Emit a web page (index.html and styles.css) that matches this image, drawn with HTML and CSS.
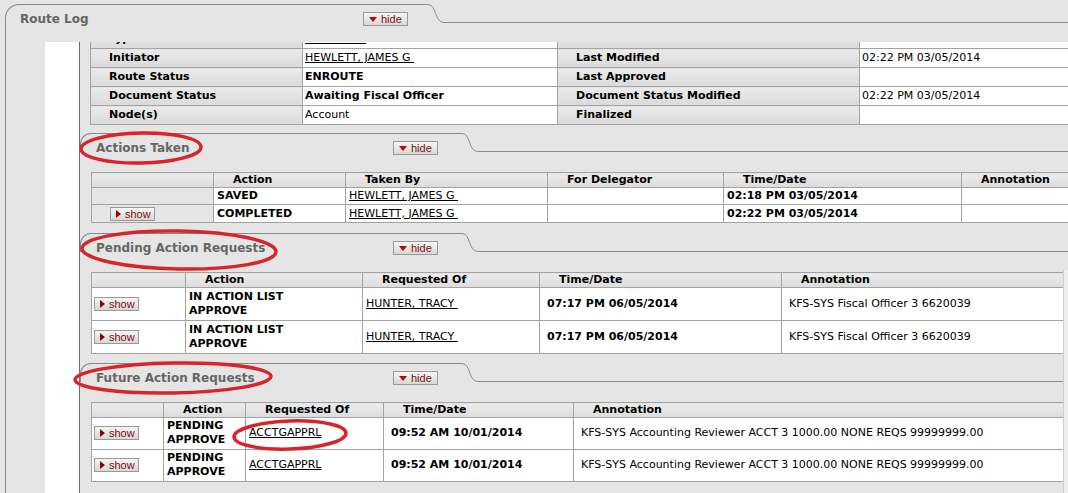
FILE: index.html
```html
<!DOCTYPE html>
<html lang="en">
<head>
<meta charset="utf-8">
<title>Route Log</title>
<link rel="stylesheet" href="styles.css">
</head>
<body>
<section class="routelog">
  <div class="tabbar">
    <div class="tab tab-main">
      <h2 class="tab-title">Route Log</h2>
      <button class="toggle" type="button"><span class="tri-down"></span>hide</button>
    </div>
    <svg class="tab-curve" viewBox="0 0 16 19" width="16" height="19"><path d="M0 0.5 C9 0.5 6 18.5 16 18.5" fill="none" stroke="#8a8a8a" stroke-width="1"/></svg>
    <div class="tab-rest"></div>
  </div>
  <div class="routelog-body">
    <div class="gutter"></div>
    <div class="frame">
      <table class="info">
        <colgroup><col class="c1"><col class="c2"><col class="c3"><col class="c4"></colgroup>
        <tr><th>Type</th><td><a href="#">ACCT DOC&nbsp;</a></td><th>Created</th><td></td></tr>
        <tr><th>Initiator</th><td><a href="#">HEWLETT, JAMES G&nbsp;</a></td><th>Last Modified</th><td>02:22 PM 03/05/2014</td></tr>
        <tr><th>Route Status</th><td><b>ENROUTE</b></td><th>Last Approved</th><td></td></tr>
        <tr><th>Document Status</th><td><b>Awaiting Fiscal Officer</b></td><th>Document Status Modified</th><td>02:22 PM 03/05/2014</td></tr>
        <tr><th>Node(s)</th><td>Account</td><th>Finalized</th><td></td></tr>
      </table>

      <section class="sub sub-taken">
        <div class="tabbar">
          <div class="tab tab-sub">
            <h3 class="tab-title">Actions Taken</h3>
            <button class="toggle" type="button"><span class="tri-down"></span>hide</button>
          </div>
          <svg class="tab-curve" viewBox="0 0 16 19" width="16" height="19"><path d="M0 0.5 C9 0.5 6 18.5 16 18.5" fill="none" stroke="#8a8a8a" stroke-width="1"/></svg>
          <div class="tab-rest"></div>
        </div>
        <div class="sub-body">
          <table class="grid taken">
            <colgroup><col style="width:122px"><col style="width:132px"><col style="width:202px"><col style="width:176px"><col style="width:238px"><col></colgroup>
            <tr><th></th><th>Action</th><th>Taken By</th><th>For Delegator</th><th>Time/Date</th><th>Annotation</th></tr>
            <tr><td class="btncell"></td><td><b>SAVED</b></td><td><a href="#">HEWLETT, JAMES G&nbsp;</a></td><td></td><td><b>02:18 PM 03/05/2014</b></td><td class="white"></td></tr>
            <tr><td class="btncell"><button class="toggle show" type="button"><span class="tri-right"></span>show</button></td><td><b>COMPLETED</b></td><td><a href="#">HEWLETT, JAMES G&nbsp;</a></td><td></td><td><b>02:22 PM 03/05/2014</b></td><td class="white"></td></tr>
          </table>
        </div>
      </section>

      <section class="sub sub-pending">
        <div class="tabbar">
          <div class="tab tab-sub">
            <h3 class="tab-title">Pending Action Requests</h3>
            <button class="toggle" type="button"><span class="tri-down"></span>hide</button>
          </div>
          <svg class="tab-curve" viewBox="0 0 16 19" width="16" height="19"><path d="M0 0.5 C9 0.5 6 18.5 16 18.5" fill="none" stroke="#8a8a8a" stroke-width="1"/></svg>
          <div class="tab-rest"></div>
        </div>
        <div class="sub-body">
          <table class="grid requests">
            <colgroup><col style="width:94px"><col style="width:177px"><col style="width:177px"><col style="width:242px"><col></colgroup>
            <tr><th></th><th>Action</th><th>Requested Of</th><th>Time/Date</th><th>Annotation</th></tr>
            <tr><td><button class="toggle show" type="button"><span class="tri-right"></span>show</button></td><td><b>IN ACTION LIST<br>APPROVE</b></td><td><a href="#">HUNTER, TRACY&nbsp;</a></td><td class="wide"><b>07:17 PM 06/05/2014</b></td><td class="wide">KFS-SYS Fiscal Officer 3 6620039</td></tr>
            <tr><td><button class="toggle show" type="button"><span class="tri-right"></span>show</button></td><td><b>IN ACTION LIST<br>APPROVE</b></td><td><a href="#">HUNTER, TRACY&nbsp;</a></td><td class="wide"><b>07:17 PM 06/05/2014</b></td><td class="wide">KFS-SYS Fiscal Officer 3 6620039</td></tr>
          </table>
        </div>
      </section>

      <section class="sub sub-future">
        <div class="tabbar">
          <div class="tab tab-sub">
            <h3 class="tab-title">Future Action Requests</h3>
            <button class="toggle" type="button"><span class="tri-down"></span>hide</button>
          </div>
          <svg class="tab-curve" viewBox="0 0 16 19" width="16" height="19"><path d="M0 0.5 C9 0.5 6 18.5 16 18.5" fill="none" stroke="#8a8a8a" stroke-width="1"/></svg>
          <div class="tab-rest"></div>
        </div>
        <div class="sub-body">
          <table class="grid requests future">
            <colgroup><col style="width:72px"><col style="width:82px"><col style="width:138px"><col style="width:190px"><col></colgroup>
            <tr><th></th><th>Action</th><th>Requested Of</th><th>Time/Date</th><th>Annotation</th></tr>
            <tr><td><button class="toggle show" type="button"><span class="tri-right"></span>show</button></td><td><b>PENDING<br>APPROVE</b></td><td><a href="#">ACCTGAPPRL</a></td><td class="wide"><b>09:52 AM 10/01/2014</b></td><td class="wide">KFS-SYS Accounting Reviewer ACCT 3 1000.00 NONE REQS 99999999.00</td></tr>
            <tr><td><button class="toggle show" type="button"><span class="tri-right"></span>show</button></td><td><b>PENDING<br>APPROVE</b></td><td><a href="#">ACCTGAPPRL</a></td><td class="wide"><b>09:52 AM 10/01/2014</b></td><td class="wide">KFS-SYS Accounting Reviewer ACCT 3 1000.00 NONE REQS 99999999.00</td></tr>
          </table>
        </div>
      </section>
    </div>
  </div>
</section>

<div class="scroll-thumb"></div>

<svg class="marks" width="1068" height="493" viewBox="0 0 1068 493">
  <g fill="none" stroke="#d8252b" stroke-width="3.5">
    <ellipse cx="141" cy="148" rx="60" ry="15" transform="rotate(-1 141 148)"/>
    <ellipse cx="179" cy="250" rx="97" ry="19" transform="rotate(1 179 250)"/>
    <ellipse cx="173" cy="378" rx="98" ry="15" transform="rotate(-1 173 378)"/>
    <ellipse cx="290" cy="435" rx="56" ry="14" transform="rotate(-2 290 435)"/>
  </g>
</svg>
</body>
</html>
```

FILE: styles.css
```css
html, body {
  margin: 0;
  padding: 0;
}

body {
  width: 1068px;
  height: 493px;
  overflow: hidden;
  position: relative;
  background: #e5e5e5;
  font-family: "DejaVu Sans", Verdana, sans-serif;
  font-size: 11px;
  color: #000;
}

.routelog {
  margin: 4px 0 0 5px;
  height: 489px;
  display: flex;
  flex-direction: column;
}

.tabbar {
  display: flex;
  height: 19px;
  flex: none;
}

.tab {
  box-sizing: border-box;
  height: 19px;
  border-top: 1px solid #8a8a8a;
  border-left: 1px solid #8a8a8a;
  display: flex;
  justify-content: space-between;
  align-items: flex-start;
  padding-top: 7px;
}

.tab-main {
  width: 423px;
  padding-left: 14px;
  padding-right: 20px;
  border-top-left-radius: 14px;
}

.tab-sub {
  width: 382px;
  padding-left: 15px;
  padding-right: 24px;
  border-top-left-radius: 11px;
}

.tab-title {
  margin: 0;
  font-size: 12px;
  line-height: 14px;
  font-weight: bold;
  color: #666;
  white-space: nowrap;
}

.tab-curve {
  display: block;
  flex: none;
}

.tab-rest {
  flex: 1;
  border-bottom: 1px solid #8a8a8a;
}

.toggle {
  box-sizing: border-box;
  width: 45px;
  height: 14px;
  margin: 0;
  padding: 0 0 0 5px;
  border: 1px solid #9a9a9a;
  background: linear-gradient(#f6f6f6, #d7d7d7);
  font-family: "Liberation Sans", Arial, sans-serif;
  font-size: 11px;
  line-height: 12px;
  color: #7a1010;
  display: flex;
  align-items: center;
  gap: 4px;
  flex: none;
}

.tri-down {
  width: 0;
  height: 0;
  border-left: 4px solid transparent;
  border-right: 4px solid transparent;
  border-top: 5px solid #c40000;
}

.tri-right {
  width: 0;
  height: 0;
  border-top: 4px solid transparent;
  border-bottom: 4px solid transparent;
  border-left: 5px solid #9a0000;
}

.routelog-body {
  flex: 1;
  min-height: 0;
  display: flex;
  border-left: 1px solid #8a8a8a;
  padding: 19px 0 0 39px;
}

.gutter {
  width: 34px;
  flex: none;
  background: #fff;
}

.frame {
  flex: 1;
  min-width: 0;
  border-left: 1px solid #6e6e6e;
  overflow: hidden;
}

table {
  border-collapse: collapse;
  table-layout: fixed;
}

a {
  color: #000;
  text-decoration: underline;
}

/* document info table (frame is scrolled, first row mostly hidden) */
.info {
  width: 1000px;
  margin: -13px 0 0 10px;
}

.info .c1 { width: 212px; }
.info .c2 { width: 255px; }
.info .c3 { width: 302px; }

.info th,
.info td {
  border: 1px solid #a3a3a3;
  line-height: 14px;
  padding: 2px 3px;
  text-align: left;
  white-space: nowrap;
  overflow: hidden;
}

.info th {
  padding-left: 18px;
  font-weight: bold;
  background: linear-gradient(#ebebeb, #dadada);
}

.info td {
  background: #fff;
  padding-left: 2px;
}

/* sub-sections */
.sub {
  margin-top: 10px;
}

.sub-taken {
  margin-top: 8px;
}

.sub-future {
  margin-top: 9px;
}

.sub-body {
  padding: 20px 0 0 11px;
}

.grid {
  width: 990px;
}

.grid th,
.grid td {
  border: 1px solid #a3a3a3;
  line-height: 14px;
  text-align: left;
  white-space: nowrap;
  overflow: hidden;
}

.grid th {
  padding: 0 3px 0 19px;
  font-weight: bold;
  background: linear-gradient(#ececec, #dcdcdc);
}

.grid td {
  background: #fff;
  padding: 1px 3px;
  vertical-align: middle;
}

.taken td.btncell {
  background: #e5e5e5;
  padding-left: 18px;
}

.taken .toggle {
  margin-top: 1px;
}

.requests td {
  padding: 2px 3px;
}

.future td {
  padding: 1px 3px 2px;
}

.requests td:first-child {
  padding-left: 2px;
}

.requests td.wide {
  padding-left: 7px;
}

.scroll-thumb {
  position: absolute;
  right: 0;
  top: 270px;
  bottom: 0;
  width: 4px;
  background: #eeeeee;
  border-left: 1px solid #cfcfcf;
}

.marks {
  position: absolute;
  left: 0;
  top: 0;
  pointer-events: none;
}
```
